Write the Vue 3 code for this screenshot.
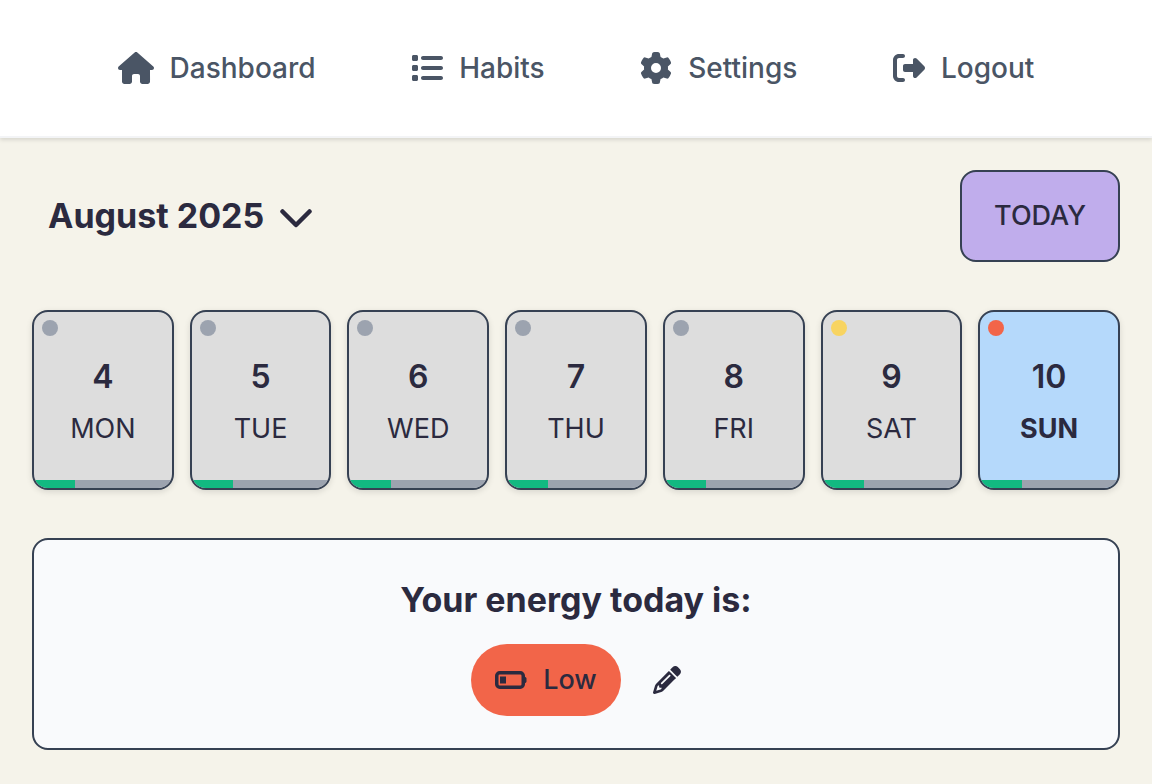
<script setup>
const links = [
  { label: 'Dashboard', icon: 'house' },
  { label: 'Habits', icon: 'list' },
  { label: 'Settings', icon: 'gear' },
  { label: 'Logout', icon: 'logout' },
]

const icons = {
  house: { box: '0 0 576 512', d: 'M575.8 255.5c0 18-15 32.1-32 32.1h-32l.7 160.2c0 2.7-.2 5.4-.5 8.1V472c0 22.1-17.9 40-40 40H456c-1.1 0-2.2 0-3.3-.1c-1.4 .1-2.8 .1-4.2 .1H416 392c-22.1 0-40-17.9-40-40V448 384c0-17.7-14.3-32-32-32H256c-17.7 0-32 14.3-32 32v64 24c0 22.1-17.9 40-40 40H160 128.1c-1.5 0-3-.1-4.5-.2c-1.2 .1-2.4 .2-3.6 .2H104c-22.1 0-40-17.9-40-40V360c0-.9 0-1.9 .1-2.8V287.6H32c-18 0-32-14-32-32.1c0-9 3-17 10-24L266.4 8c7-7 15-8 22-8s15 2 21 7L564.8 231.5c8 7 12 15 11 24z' },
  list: { box: '0 0 512 512', d: 'M40 48C26.7 48 16 58.7 16 72v48c0 13.3 10.7 24 24 24H88c13.3 0 24-10.7 24-24V72c0-13.3-10.7-24-24-24H40zM192 64c-17.7 0-32 14.3-32 32s14.3 32 32 32H480c17.7 0 32-14.3 32-32s-14.3-32-32-32H192zm0 160c-17.7 0-32 14.3-32 32s14.3 32 32 32H480c17.7 0 32-14.3 32-32s-14.3-32-32-32H192zm0 160c-17.7 0-32 14.3-32 32s14.3 32 32 32H480c17.7 0 32-14.3 32-32s-14.3-32-32-32H192zM16 232v48c0 13.3 10.7 24 24 24H88c13.3 0 24-10.7 24-24V232c0-13.3-10.7-24-24-24H40c-13.3 0-24 10.7-24 24zM40 368c-13.3 0-24 10.7-24 24v48c0 13.3 10.7 24 24 24H88c13.3 0 24-10.7 24-24V392c0-13.3-10.7-24-24-24H40z' },
  gear: { box: '0 0 512 512', d: 'M495.9 166.6c3.2 8.7 .5 18.4-6.4 24.6l-43.3 39.4c1.1 8.3 1.7 16.8 1.7 25.4s-.6 17.1-1.7 25.4l43.3 39.4c6.9 6.2 9.6 15.9 6.4 24.6c-4.4 11.9-9.7 23.3-15.8 34.3l-4.7 8.1c-6.6 11-14 21.4-22.1 31.2c-5.9 7.2-15.7 9.6-24.5 6.8l-55.7-17.7c-13.4 10.3-28.2 18.9-44 25.4l-12.5 57.1c-2 9.1-9 16.3-18.2 17.8c-13.8 2.3-28 3.5-42.5 3.5s-28.7-1.2-42.5-3.5c-9.2-1.5-16.2-8.7-18.2-17.8l-12.5-57.1c-15.8-6.5-30.6-15.1-44-25.4L83.1 425.9c-8.8 2.8-18.6 .3-24.5-6.8c-8.1-9.8-15.5-20.2-22.1-31.2l-4.7-8.1c-6.1-11-11.4-22.4-15.8-34.3c-3.2-8.7-.5-18.4 6.4-24.6l43.3-39.4C64.6 273.1 64 264.6 64 256s.6-17.1 1.7-25.4L22.4 191.2c-6.9-6.2-9.6-15.9-6.4-24.6c4.4-11.9 9.7-23.3 15.8-34.3l4.7-8.1c6.6-11 14-21.4 22.1-31.2c5.9-7.2 15.7-9.6 24.5-6.8l55.7 17.7c13.4-10.3 28.2-18.9 44-25.4l12.5-57.1c2-9.1 9-16.3 18.2-17.8C227.3 1.2 241.5 0 256 0s28.7 1.2 42.5 3.5c9.2 1.5 16.2 8.7 18.2 17.8l12.5 57.1c15.8 6.5 30.6 15.1 44 25.4l55.7-17.7c8.8-2.8 18.6-.3 24.5 6.8c8.1 9.8 15.5 20.2 22.1 31.2l4.7 8.1c6.1 11 11.4 22.4 15.8 34.3zM256 336a80 80 0 1 0 0-160 80 80 0 1 0 0 160z' },
  logout: { box: '0 0 512 512', d: 'M377.9 105.9L500.7 228.7c7.2 7.2 11.3 17.1 11.3 27.3s-4.1 20.1-11.3 27.3L377.9 406.1c-6.4 6.4-15 9.9-24 9.9c-18.7 0-33.9-15.2-33.9-33.9l0-62.1-128 0c-17.7 0-32-14.3-32-32l0-64c0-17.7 14.3-32 32-32l128 0 0-62.1c0-18.7 15.2-33.9 33.9-33.9c9 0 17.6 3.6 24 9.9zM160 96L96 96c-17.7 0-32 14.3-32 32l0 256c0 17.7 14.3 32 32 32l64 0c17.7 0 32 14.3 32 32s-14.3 32-32 32l-64 0c-53 0-96-43-96-96L0 128C0 75 43 32 96 32l64 0c17.7 0 32 14.3 32 32s-14.3 32-32 32z' },
}

const days = [
  { date: 4, name: 'MON', energy: 'none' },
  { date: 5, name: 'TUE', energy: 'none' },
  { date: 6, name: 'WED', energy: 'none' },
  { date: 7, name: 'THU', energy: 'none' },
  { date: 8, name: 'FRI', energy: 'none' },
  { date: 9, name: 'SAT', energy: 'medium' },
  { date: 10, name: 'SUN', energy: 'low', today: true },
].map((day) => ({ ...day, progress: 30 }))
</script>

<template>
  <div class="page">
    <nav class="nav">
      <a v-for="link in links" :key="link.label" href="#" class="nav-link">
        <svg class="nav-icon" :viewBox="icons[link.icon].box" aria-hidden="true">
          <path :d="icons[link.icon].d" />
        </svg>
        <span>{{ link.label }}</span>
      </a>
    </nav>

    <main class="content">
      <header class="toolbar">
        <button type="button" class="month">
          <span>August 2025</span>
          <svg class="chevron" viewBox="0 0 32 24" aria-hidden="true">
            <path d="M2.5 7.5L16 21L29.5 7.5" />
          </svg>
        </button>
        <button type="button" class="today">TODAY</button>
      </header>

      <section class="week">
        <button v-for="day in days" :key="day.date" type="button" class="day" :class="{ current: day.today }">
          <span class="dot" :class="day.energy"></span>
          <span class="date">{{ day.date }}</span>
          <span class="name">{{ day.name }}</span>
          <span class="track"><span class="bar" :style="{ width: day.progress + '%' }"></span></span>
        </button>
      </section>

      <section class="energy">
        <h2>Your energy today is:</h2>
        <div class="energy-row">
          <span class="level">
            <svg class="battery" viewBox="0 0 32 18" aria-hidden="true">
              <rect x="1.75" y="1.75" width="26.5" height="14.5" rx="3" fill="none" stroke="currentColor" stroke-width="3.5" />
              <rect x="5" y="5.5" width="6" height="7" />
              <path d="M29 4.5C29.5 5.5 30 6 31 6.5Q31.5 6.8 31.5 7.5V10.5Q31.5 11.2 31 11.5C30 12 29.5 12.5 29 13.5z" />
            </svg>
            <span>Low</span>
          </span>
          <button type="button" class="edit" aria-label="Edit energy">
            <svg viewBox="0 0 512 512" aria-hidden="true">
              <path d="M410.3 231l11.3-11.3-33.9-33.9-62.1-62.1L291.7 89.8l-11.3 11.3-22.6 22.6L58.6 322.9c-10.4 10.4-18 23.3-22.2 37.4L1 480.7c-2.5 8.4-.2 17.5 6.1 23.7s15.3 8.5 23.7 6.1l120.3-35.4c14.1-4.2 27-11.8 37.4-22.2L387.7 253.7 410.3 231zM160 399.4l-9.1 22.7c-4 3.1-8.5 5.4-13.3 6.9L59.4 452l23-78.1c1.4-4.9 3.8-9.4 6.9-13.3l22.7-9.1 0 32c0 8.8 7.2 16 16 16l32 0zM362.7 18.7L348.3 33.2 325.7 55.8 314.3 67.1l33.9 33.9 62.1 62.1 33.9 33.9 11.3-11.3 22.6-22.6 14.5-14.5c25-25 25-65.5 0-90.5L453.3 18.7c-25-25-65.5-25-90.5 0zm-47.4 168l-144 144c-6.2 6.2-16.4 6.2-22.6 0s-6.2-16.4 0-22.6l144-144c6.2-6.2 16.4-6.2 22.6 0s6.2 16.4 0 22.6z" />
            </svg>
          </button>
        </div>
      </section>
    </main>
  </div>
</template>

<style>
body {
  background: #f5f3ea;
}
</style>

<style scoped>
.page {
  font-family: Inter, "Liberation Sans", sans-serif;
  font-size: 27px;
  line-height: 40px;
  color: #2b2a3f;
}

button {
  font: inherit;
  color: inherit;
  cursor: pointer;
}

svg {
  display: block;
  flex: none;
  fill: currentColor;
}

.nav {
  display: flex;
  justify-content: space-evenly;
  padding: 48px 22px;
  background: #fff;
  border-bottom: 2px solid #f3f4f6;
  box-shadow: 0 2px 4px rgba(0, 0, 0, 0.12);
}

.nav-link {
  display: flex;
  align-items: center;
  gap: 16px;
  color: #4a5565;
  font-size: 28px;
  font-weight: 500;
  text-decoration: none;
}

.nav-icon {
  height: 32px;
}

.content {
  display: flex;
  flex-direction: column;
  gap: 48px;
  padding: 32px;
}

.toolbar {
  display: flex;
  align-items: center;
  justify-content: space-between;
}

.month {
  display: flex;
  align-items: center;
  gap: 16px;
  padding: 0 16px;
  border: 0;
  background: none;
  font-size: 34px;
  font-weight: 700;
}

.chevron {
  width: 32px;
  fill: none;
  stroke: currentColor;
  stroke-width: 4.5;
  stroke-linecap: round;
  stroke-linejoin: round;
}

.today {
  padding: 24px 32px;
  border: 2px solid #364153;
  border-radius: 16px;
  background: #c0adec;
  font-weight: 500;
}

.week {
  display: grid;
  grid-template-columns: repeat(7, 1fr);
  gap: 16px;
}

.day {
  position: relative;
  display: flex;
  flex-direction: column;
  align-items: center;
  gap: 10px;
  padding: 43px 0 39px;
  overflow: hidden;
  border: 2px solid #364153;
  border-radius: 16px;
  background: #ddd;
  box-shadow: 0 2px 6px rgba(0, 0, 0, 0.12);
}

.day.current {
  background: #b5d9fb;
}

.date {
  font-size: 32px;
  line-height: 44px;
  font-weight: 600;
}

.current .name {
  font-weight: 700;
}

.dot {
  position: absolute;
  top: 8px;
  left: 8px;
  width: 16px;
  height: 16px;
  border-radius: 50%;
  background: #9ca3af;
}

.dot.medium {
  background: #f8d461;
}

.dot.low {
  background: #f26549;
}

.track {
  position: absolute;
  right: 0;
  bottom: 0;
  left: 0;
  height: 8px;
  background: #9ca3af;
}

.bar {
  display: block;
  height: 100%;
  background: #12b981;
}

.energy {
  display: flex;
  flex-direction: column;
  align-items: center;
  gap: 16px;
  padding: 32px;
  border: 2px solid #364153;
  border-radius: 16px;
  background: #f9fafc;
}

h2 {
  margin: 0;
  font-size: 34px;
  line-height: 56px;
  font-weight: 700;
}

.energy-row {
  display: flex;
  align-items: center;
  gap: 32px;
}

.level {
  display: flex;
  align-items: center;
  gap: 16px;
  padding: 16px 24px;
  border-radius: 36px;
  background: #f26549;
  font-weight: 500;
}

.battery {
  width: 32px;
}

.edit {
  padding: 0;
  border: 0;
  background: none;
}

.edit svg {
  width: 28px;
}
</style>
